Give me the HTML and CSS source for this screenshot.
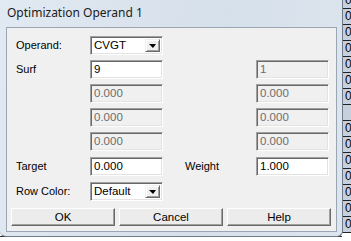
FILE: index.html
```html
<!DOCTYPE html>
<html lang="en">
<head>
    <meta charset="UTF-8">
    <title>Optimization Operand 1</title>
    <link rel="stylesheet" href="styles.css">
</head>
<body>

    <!-- Spreadsheet behind the dialog -->
    <div class="sheet">
        <div class="sheet-col">
            <div class="cell">0</div>
            <div class="cell">0</div>
            <div class="cell">0</div>
            <div class="cell">0</div>
            <div class="cell">0</div>
            <div class="cell">0</div>
            <div class="cell">0</div>
            <div class="cell"></div>
            <div class="cell">0</div>
            <div class="cell">0</div>
            <div class="cell">0</div>
            <div class="cell">0</div>
            <div class="cell">0</div>
            <div class="cell">0</div>
            <div class="cell">0</div>
        </div>
        <div class="sheet-row">
            <span class="cut cut-a">0.000</span>
            <span class="cut cut-b">0.000</span>
        </div>
    </div>

    <!-- Dialog window -->
    <div class="window">
        <div class="titlebar">Optimization Operand 1</div>

        <div class="client">
            <div class="form">
                <span class="label r1">Operand:</span>
                <div class="combo r1 c2">
                    <span class="combo-text">CVGT</span>
                    <span class="drop"></span>
                </div>

                <span class="label r2">Surf</span>
                <div class="field r2 c2">9</div>
                <div class="field off r2 c5">1</div>

                <div class="field off r3 c2">0.000</div>
                <div class="field off r3 c5">0.000</div>

                <div class="field off r4 c2">0.000</div>
                <div class="field off r4 c5">0.000</div>

                <div class="field off r5 c2">0.000</div>
                <div class="field off r5 c5">0.000</div>

                <span class="label r6">Target</span>
                <div class="field r6 c2">0.000</div>
                <span class="label r6 c4">Weight</span>
                <div class="field r6 c5">1.000</div>

                <span class="label r7">Row Color:</span>
                <div class="combo r7 c2">
                    <span class="combo-text">Default</span>
                    <span class="drop"></span>
                </div>
            </div>

            <div class="buttons">
                <button class="btn">OK</button>
                <button class="btn">Cancel</button>
                <button class="btn">Help</button>
            </div>
        </div>
    </div>

</body>
</html>
```

FILE: styles.css
```css
/* Page */
body {
    margin: 0;
    width: 351px;
    height: 241px;
    overflow: hidden;
    position: relative;
    background: #ffffff;
    font-family: "Liberation Sans", Arial, sans-serif;
    font-size: 11px;
    color: #000;
}

/* Spreadsheet peeking out behind the dialog */
.sheet {
    position: absolute;
    inset: 0;
}

.sheet-col {
    position: absolute;
    left: 342px;
    top: -7px;
    width: 20px;
    border-left: 1px solid #333;
    background: #c5d0dc;
}

.cell {
    height: 15px;
    line-height: 15px;
    border-bottom: 1px solid #222;
    padding-left: 2px;
    font-size: 12px;
}

.sheet-row {
    position: absolute;
    left: 0;
    top: 236px;
    width: 342px;
    height: 6px;
    border-top: 1px solid #333;
    overflow: hidden;
}

.cut {
    position: absolute;
    top: 2px;
    font-size: 12px;
    line-height: 14px;
}

.cut-a { left: 91px; }
.cut-b { left: 218px; }

/* Window frame */
.window {
    position: absolute;
    left: 0;
    top: 0;
    width: 343px;
    height: 237px;
    box-sizing: border-box;
    border-right: 1px solid #6f7b88;
    border-bottom: 1px solid #6f7b88;
    border-radius: 0 0 6px 6px;
    background: linear-gradient(100deg, #e1e9f2 0%, #d6e0ea 60%, #dde6ef 100%);
    padding: 0 5px 4px 6px;
}

.titlebar {
    height: 27px;
    line-height: 26px;
    padding-left: 1px;
    font-family: "Noto Sans", "Open Sans", sans-serif;
    font-size: 12px;
    color: #1b1b1b;
}

.client {
    height: 205px;
    box-sizing: border-box;
    background: #f0f0f0;
    border: 1px solid #9aa6b3;
    padding: 8px 4px 0 4px;
}

/* Form grid */
.form {
    display: grid;
    grid-template-columns: 74px 73px 22px 71px 73px;
    grid-template-rows: 24px 24px 24px 24px 25px 25px 26px;
    padding-left: 5px;
    align-items: start;
}

.r1 { grid-row: 1; }
.r2 { grid-row: 2; }
.r3 { grid-row: 3; }
.r4 { grid-row: 4; }
.r5 { grid-row: 5; }
.r6 { grid-row: 6; }
.r7 { grid-row: 7; }

.label { grid-column: 1; line-height: 19px; }
.c2 { grid-column: 2; }
.c4 { grid-column: 4; }
.c5 { grid-column: 5; }

/* Sunken edit boxes */
.field {
    height: 19px;
    box-sizing: border-box;
    background: #fff;
    border: 1px solid;
    border-color: #a0a0a0 #ffffff #ffffff #a0a0a0;
    box-shadow: inset 1px 1px 0 #696969, inset -1px -1px 0 #e3e3e3;
    padding-left: 3px;
    line-height: 17px;
    font-size: 11.5px;
}

.field.off {
    background: #f0f0f0;
    color: #6d6d6d;
}

/* Drop-down combos */
.combo {
    height: 19px;
    box-sizing: border-box;
    background: #fff;
    border: 1px solid;
    border-color: #a0a0a0 #ffffff #ffffff #a0a0a0;
    box-shadow: inset 1px 1px 0 #696969, inset -1px -1px 0 #e3e3e3;
    display: flex;
    align-items: center;
    padding: 2px 2px 2px 3px;
}

.combo-text {
    flex: 1;
    font-size: 11.5px;
    line-height: 15px;
}

.drop {
    width: 15px;
    height: 13px;
    box-sizing: border-box;
    background: #f0f0f0;
    border: 1px solid;
    border-color: #f0f0f0 #696969 #696969 #f0f0f0;
    box-shadow: inset 1px 1px 0 #fff, inset -1px -1px 0 #a0a0a0;
    display: flex;
    align-items: center;
    justify-content: center;
}

.drop::after {
    content: "";
    border-left: 4px solid transparent;
    border-right: 3px solid transparent;
    border-top: 4px solid #000;
}

/* Button row */
.buttons {
    display: flex;
    gap: 4px;
    margin-top: 0;
    padding-right: 1px;
}

.btn {
    flex: 1;
    height: 18px;
    padding: 0;
    font-family: "Liberation Sans", Arial, sans-serif;
    font-size: 11.5px;
    color: #000;
    background: #ececec;
    border: 1px solid;
    border-color: #fff #696969 #696969 #fff;
    box-shadow: inset -1px -1px 0 #a0a0a0;
}
```
